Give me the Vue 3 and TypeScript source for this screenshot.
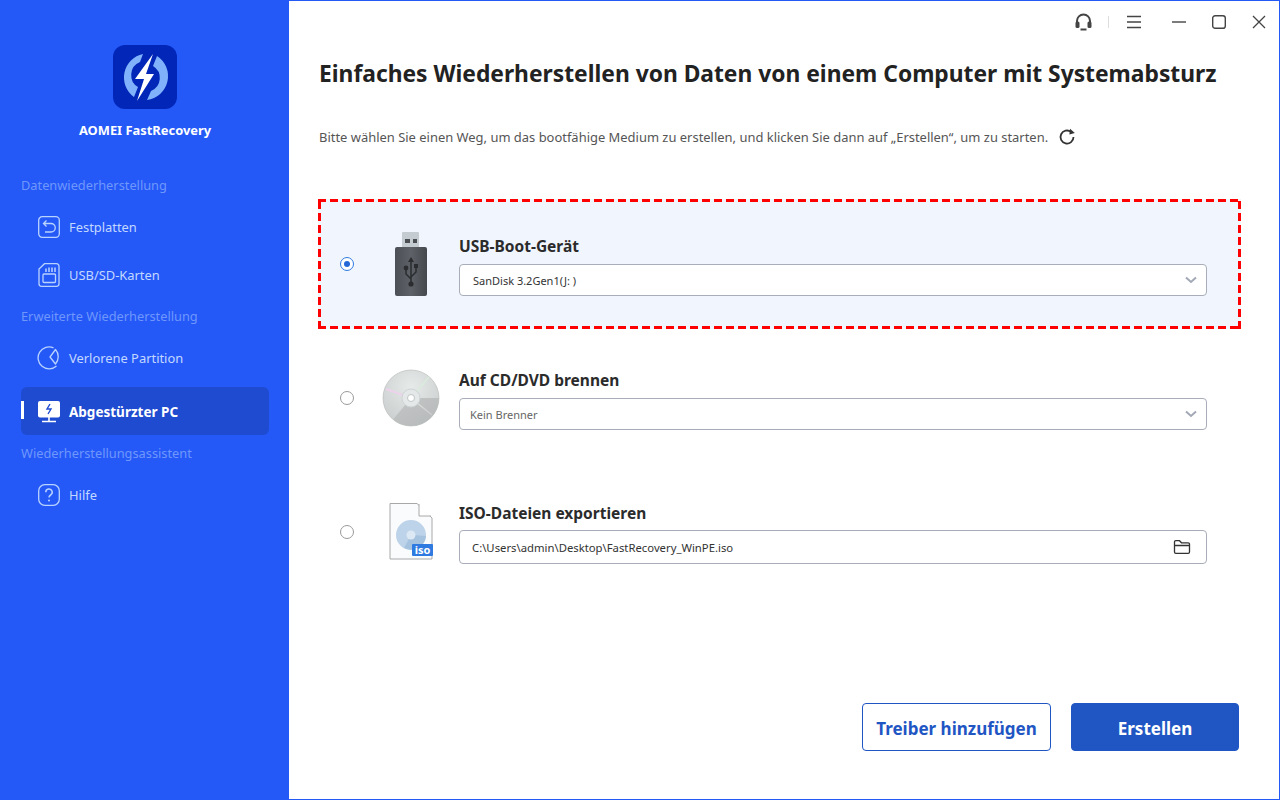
<script setup lang="ts">
interface NavItem {
  label: string
  icon: string
  active?: boolean
}

const nav: { title: string; items: NavItem[] }[] = [
  {
    title: 'Datenwiederherstellung',
    items: [
      { label: 'Festplatten', icon: 'disk' },
      { label: 'USB/SD-Karten', icon: 'sd' }
    ]
  },
  {
    title: 'Erweiterte Wiederherstellung',
    items: [
      { label: 'Verlorene Partition', icon: 'part' },
      { label: 'Abgestürzter PC', icon: 'pc', active: true }
    ]
  },
  {
    title: 'Wiederherstellungsassistent',
    items: [{ label: 'Hilfe', icon: 'help' }]
  }
]
</script>

<template>
  <div class="app">
    <aside class="side">
      <div class="brand">
        <svg class="logo" width="64" height="64" viewBox="0 0 64 64">
          <rect width="64" height="64" rx="12" fill="#0126b8" />
          <path d="M30 9 A24 24 0 0 0 21 52 L25 42 A14 14 0 0 1 27 17 Z" fill="#7fb2fb" />
          <path d="M34 55 A24 24 0 0 0 44 11 L40 21 A14 14 0 0 1 38 46 Z" fill="#7fb2fb" />
          <path d="M40 9 L22 34 H31 L24 56 L41 29 H33 Z" fill="#fff" />
        </svg>
        <div class="brand-name">AOMEI FastRecovery</div>
      </div>
      <template v-for="(group, g) in nav" :key="g">
        <div class="group-title">{{ group.title }}</div>
        <div v-for="item in group.items" :key="item.label" class="nav-item" :class="{ active: item.active }">
          <svg class="nav-icon" width="24" height="24" viewBox="0 0 24 24" fill="none" stroke="#b9d3ff" stroke-width="1.3">
            <template v-if="item.icon === 'disk'">
              <rect x="1.7" y="1.7" width="20.6" height="20.6" rx="3.5" />
              <path d="M9.5 5.5 L6.5 8.5 L9.5 11.5 M6.5 8.5 H14 A4.2 4.2 0 0 1 14 17 H8" />
            </template>
            <template v-else-if="item.icon === 'sd'">
              <path d="M7.500 0.700 H19.500 A2.500 2.500 0 0 1 22 3.200 V20.800 A2.500 2.500 0 0 1 19.500 23.300 H4.500 A2.500 2.500 0 0 1 2 20.800 V6 Z" />
              <rect x="6" y="11" width="12.500" height="8.500" rx="1" />
              <path d="M9 5.500 V9 M12 4.500 V9 M15 4.500 V9 M18 4.500 V9" stroke-width="1.500" />
            </template>
            <template v-else-if="item.icon === 'part'">
              <path d="M16.500 1.800 A11 11 0 1 0 19.500 20" />
              <path d="M13 11 L18.500 3.500 A11 11 0 0 1 18.500 18 Z" stroke-linejoin="round" />
            </template>
            <template v-else-if="item.icon === 'pc'">
              <rect x="1" y="2" width="22" height="16.5" rx="2" fill="#fff" stroke="none" />
              <path d="M13 5 L10 10 H14 L11 15" stroke="#1e4bcf" stroke-width="1.4" />
              <path d="M12 18 V22 M5 22.5 H19" stroke="#fff" stroke-width="1.6" />
            </template>
            <template v-else>
              <rect x="1.7" y="1.7" width="20.6" height="20.6" rx="6" />
              <path d="M8.8 9.3 A3.2 3.2 0 1 1 13.6 12 C12.5 12.7 12 13.2 12 14.6" stroke-width="1.5" />
              <circle cx="12" cy="17.5" r="1" fill="#b9d3ff" stroke="none" />
            </template>
          </svg>
          <span>{{ item.label }}</span>
        </div>
      </template>
    </aside>

    <main class="main">
      <div class="titlebar">
        <svg width="17" height="18" viewBox="0 0 17 18" fill="none" stroke="#444" stroke-width="2">
          <path d="M2 11 V8 A6.500 6.500 0 0 1 15 8 V11" />
          <rect x="0.500" y="8.500" width="4" height="6.500" rx="1.500" fill="#444" stroke="none" />
          <rect x="12.500" y="8.500" width="4" height="6.500" rx="1.500" fill="#444" stroke="none" />
          <path d="M5.500 16.500 H11.500" />
        </svg>
        <span class="bar-sep"></span>
        <svg class="t-menu" width="14" height="14" viewBox="0 0 14 14" fill="none" stroke="#444" stroke-width="1.4">
          <path d="M0 1.500 H14 M0 7 H14 M0 12.500 H14" />
        </svg>
        <svg class="t-min" width="14" height="14" viewBox="0 0 14 14" fill="none" stroke="#444" stroke-width="1.4">
          <path d="M0 7 H14" />
        </svg>
        <svg class="t-max" width="14" height="14" viewBox="0 0 14 14" fill="none" stroke="#444" stroke-width="1.4">
          <rect x="0.7" y="0.7" width="12.6" height="12.6" rx="2.4" />
        </svg>
        <svg class="t-close" width="14" height="14" viewBox="0 0 14 14" fill="none" stroke="#444" stroke-width="1.3">
          <path d="M1 1 L13 13 M13 1 L1 13" />
        </svg>
      </div>

      <h1 class="title">Einfaches Wiederherstellen von Daten von einem Computer mit Systemabsturz</h1>
      <div class="sub">
        <span>Bitte wählen Sie einen Weg, um das bootfähige Medium zu erstellen, und klicken Sie dann auf „Erstellen“, um zu starten.</span>
        <svg width="18" height="18" viewBox="0 0 18 18" fill="none" stroke="#333" stroke-width="1.8">
          <path d="M15.500 9 A6.500 6.500 0 1 1 13 3.900" />
          <path d="M12 0.800 L16.800 5 L11.400 6.600 Z" fill="#333" stroke="none" />
        </svg>
      </div>

      <section class="option selected">
        <span class="radio on"></span>
        <svg class="opt-icon" width="64" height="66" viewBox="0 0 64 66">
          <defs>
            <linearGradient id="usbBody" x1="0" x2="1" y1="0" y2="0">
              <stop offset="0" stop-color="#4c4f55" />
              <stop offset="0.5" stop-color="#5e6167" />
              <stop offset="1" stop-color="#45484d" />
            </linearGradient>
          </defs>
          <rect x="23" y="1" width="17" height="18" rx="1" fill="#c4cbd1" />
          <rect x="26" y="8" width="5" height="4" fill="#4a4d52" />
          <rect x="34" y="8" width="4" height="4" fill="#4a4d52" />
          <rect x="16" y="16" width="32" height="49" rx="2" fill="url(#usbBody)" />
          <g fill="none" stroke="#2a2c2f" stroke-width="1.500">
            <path d="M32 29 V52 M32 48 L27 43 V38 M32 46 L37 41 V36" />
          </g>
          <path d="M32 26 L35 31 H29 Z" fill="#2a2c2f" />
          <circle cx="27" cy="37" r="2.400" fill="#2a2c2f" />
          <rect x="35" y="33" width="4" height="4" fill="#2a2c2f" />
          <circle cx="32" cy="53" r="2.600" fill="#2a2c2f" />
        </svg>
        <div class="opt-body">
          <div class="opt-title">USB-Boot-Gerät</div>
          <div class="field">
            <span class="val dark">SanDisk 3.2Gen1(J: )</span>
            <svg width="12" height="8" viewBox="0 0 12 8" fill="none" stroke="#a2a8b5" stroke-width="2"><path d="M1 1.500 L6 6 L11 1.500" /></svg>
          </div>
        </div>
      </section>

      <section class="option cd">
        <span class="radio"></span>
        <svg class="opt-icon" width="64" height="58" viewBox="0 0 58 58">
          <defs>
            <radialGradient id="cdBase" cx="0.5" cy="0.3" r="0.8">
              <stop offset="0" stop-color="#e6ebea" />
              <stop offset="1" stop-color="#c6caca" />
            </radialGradient>
            <linearGradient id="cdDark" x1="0" x2="1" y1="0" y2="1">
              <stop offset="0" stop-color="#c4c6c6" />
              <stop offset="1" stop-color="#b6b9b9" />
            </linearGradient>
            <linearGradient id="cdShine" x1="29" y1="29" x2="50" y2="46" gradientUnits="userSpaceOnUse">
              <stop offset="0" stop-color="#e4e6e6" />
              <stop offset="1" stop-color="#c9cbcb" />
            </linearGradient>
          </defs>
          <circle cx="29" cy="29" r="28" fill="url(#cdBase)" stroke="#b4b6b6" stroke-width="0.6" />
          <path d="M29 29 L57 29 A28 28 0 0 1 11 50.500 Z" fill="url(#cdDark)" />
          <path d="M29 29 L50 46" stroke="url(#cdShine)" stroke-width="1.500" />
          <path d="M29 29 L4 20" stroke="#ecd2ea" stroke-width="2" />
          <path d="M29 29 L47 8" stroke="#d8ecdc" stroke-width="1.200" />
          <circle cx="29" cy="29" r="9" fill="#e4e8e8" stroke="#cfd3d3" />
          <circle cx="29" cy="29" r="3.500" fill="#fff" stroke="#c0c4c4" />
        </svg>
        <div class="opt-body">
          <div class="opt-title">Auf CD/DVD brennen</div>
          <div class="field">
            <span class="val muted">Kein Brenner</span>
            <svg width="12" height="8" viewBox="0 0 12 8" fill="none" stroke="#a2a8b5" stroke-width="2"><path d="M1 1.500 L6 6 L11 1.500" /></svg>
          </div>
        </div>
      </section>

      <section class="option iso">
        <span class="radio"></span>
        <svg class="opt-icon" width="64" height="58" viewBox="0 0 64 58">
          <path d="M11 0.500 H38 L53 15 V56 H11 Z" fill="#fafbfd" stroke="#a8a8a8" />
          <path d="M40 1 V13 H52" fill="#fff" stroke="#a8a8a8" />
          <circle cx="32" cy="32" r="15" fill="#bdd3e9" />
          <path d="M32 32 L47 33 A15 15 0 0 1 25 45 Z" fill="#a5c2df" />
          <circle cx="32" cy="32" r="4.500" fill="#dce8f3" />
          <rect x="33" y="41" width="21" height="12" rx="1" fill="#2f7ae0" />
          <text x="43.500" y="51" text-anchor="middle" class="iso-tag">iso</text>
        </svg>
        <div class="opt-body">
          <div class="opt-title">ISO-Dateien exportieren</div>
          <div class="field tall">
            <span class="val dark iso-val">C:\Users\admin\Desktop\FastRecovery_WinPE.iso</span>
            <svg width="18" height="16" viewBox="0 0 18 16" fill="none" stroke="#333" stroke-width="1.300">
              <path d="M1.500 13 V3 A1.300 1.300 0 0 1 2.800 1.700 H6.500 L8.500 3.800 H15.200 A1.300 1.300 0 0 1 16.500 5.100 V13 A1.300 1.300 0 0 1 15.200 14.300 H2.800 A1.300 1.300 0 0 1 1.500 13 Z M1.500 6.500 H16.500" />
            </svg>
          </div>
        </div>
      </section>

      <div class="actions">
        <button type="button" class="btn ghost">Treiber hinzufügen</button>
        <button type="button" class="btn primary">Erstellen</button>
      </div>
    </main>
  </div>
</template>

<style>
html, body { margin: 0; padding: 0; background: #fff; }
</style>

<style scoped>
.app {
  display: flex;
  width: 1280px;
  height: 800px;
  overflow: hidden;
  font-family: "Noto Sans", "Liberation Sans", sans-serif;
  color: #2b2b2b;
}
.side {
  width: 289px;
  flex: none;
  background: #2459f8;
  padding-top: 45px;
  box-sizing: border-box;
}
.brand {
  display: flex;
  flex-direction: column;
  align-items: center;
  height: 123px;
}
.logo { display: block; }
.brand-name {
  margin-top: 11px;
  padding-left: 1px;
  font-size: 12.900px;
  line-height: 20px;
  font-weight: 700;
  color: #fff;
}
.group-title {
  height: 35px;
  line-height: 35px;
  padding-left: 21px;
  font-size: 12.800px;
  color: #6f97fb;
}
.nav-item {
  position: relative;
  display: flex;
  align-items: center;
  gap: 8px;
  height: 48px;
  margin: 0 20px 0 21px;
  padding-left: 16px;
  font-size: 12.900px;
  color: #c3d8ff;
  border-radius: 6px;
}
.nav-item.active {
  margin-top: 5px;
  margin-bottom: 1px;
  background: #1e4bcf;
  color: #fff;
  font-size: 13.500px;
  font-weight: 700;
}
.nav-item.active span { padding-top: 2px; }
.nav-item.active::before {
  content: "";
  position: absolute;
  left: 0;
  top: 14px;
  width: 3px;
  height: 18px;
  background: #fff;
}
.nav-icon { flex: none; }

.main {
  flex: 1;
  position: relative;
  box-sizing: border-box;
  border: 1px solid #2459f8;
  border-left: 0;
  padding: 0 38px 0 29px;
  display: flex;
  flex-direction: column;
  min-width: 0;
}
.titlebar {
  display: flex;
  align-items: center;
  justify-content: flex-end;
  height: 41px;
  margin-right: -25px;
}
.bar-sep {
  width: 1px;
  height: 12px;
  background: #ddd;
  margin: 0 18px 0 16px;
}
.t-menu { margin-right: 31px; }
.t-min { margin-right: 26px; }
.t-max { margin-right: 26px; }
.title {
  margin: 16px 0 0 1px;
  font-size: 22.800px;
  line-height: 32px;
  font-weight: 700;
  white-space: nowrap;
  color: #222;
}
.sub {
  display: flex;
  align-items: center;
  gap: 10px;
  margin: 37px 0 0 1px;
  height: 20px;
  font-size: 12.950px;
  color: #555;
  white-space: nowrap;
}
.option {
  display: flex;
  align-items: center;
  box-sizing: border-box;
  width: 923px;
}
.selected {
  margin-top: 52px;
  height: 130px;
  padding: 0 34px 0 22px;
  /* hand-drawn dashes: a css dashed border comes out too fine */
  background:
    repeating-linear-gradient(90deg, #f00 0 8px, transparent 8px 12px) left top / 100% 3px no-repeat,
    repeating-linear-gradient(90deg, #f00 0 8px, transparent 8px 12px) left bottom / 100% 3px no-repeat,
    repeating-linear-gradient(0deg, #f00 0 8px, transparent 8px 12px) left top / 3px 100% no-repeat,
    repeating-linear-gradient(0deg, #f00 0 8px, transparent 8px 12px) right top / 3px 100% no-repeat,
    #f1f6fe;
}
.cd {
  height: 134px;
  padding: 4px 34px 0 22px;
}
.iso {
  height: 133px;
  padding: 4px 34px 0 22px;
}
.radio {
  flex: none;
  position: relative;
  width: 14px;
  height: 14px;
  box-sizing: border-box;
  border: 1px solid #9a9a9a;
  border-radius: 50%;
  background: #fff;
}
.radio.on { border-color: #2f7ae0; }
.radio.on::after {
  content: "";
  position: absolute;
  left: 3px;
  top: 3px;
  width: 6px;
  height: 6px;
  border-radius: 50%;
  background: #2468d8;
}
.opt-icon {
  flex: none;
  margin: 0 16px 0 25px;
}
.opt-body { flex: 1; min-width: 0; margin-top: 3px; }
.opt-title {
  font-size: 15.500px;
  line-height: 22px;
  font-weight: 700;
  color: #2b2b2b;
  margin-bottom: 7px;
}
.iso .opt-title { margin-bottom: 6px; }
.field {
  display: flex;
  align-items: center;
  justify-content: space-between;
  height: 32px;
  box-sizing: border-box;
  padding: 0 9px 0 10px;
  background: #fff;
  border: 1px solid #a8adb9;
  border-radius: 4px;
  font-size: 11px;
}
.field.tall { height: 34px; padding-right: 15px; font-size: 11.300px; }
.val.dark { color: #333; padding-left: 3px; }
.val.muted { color: #666; }
.iso-val { padding-left: 2px !important; }
.iso-tag {
  font-family: "Noto Sans", sans-serif;
  font-size: 11px;
  font-weight: 700;
  fill: #fff;
}
.actions {
  position: absolute;
  right: 40px;
  bottom: 48px;
  display: flex;
  gap: 20px;
}
.btn {
  height: 48px;
  border-radius: 4px;
  box-sizing: border-box;
  font-family: inherit;
  font-size: 17px;
  font-weight: 700;
  padding: 2px 0 0;
}
.ghost {
  width: 189px;
  background: #fff;
  color: #1f56c4;
  border: 1px solid #1f56c4;
}
.primary {
  width: 168px;
  background: #1f56c4;
  color: #fff;
  border: 1px solid #1f56c4;
}
</style>
